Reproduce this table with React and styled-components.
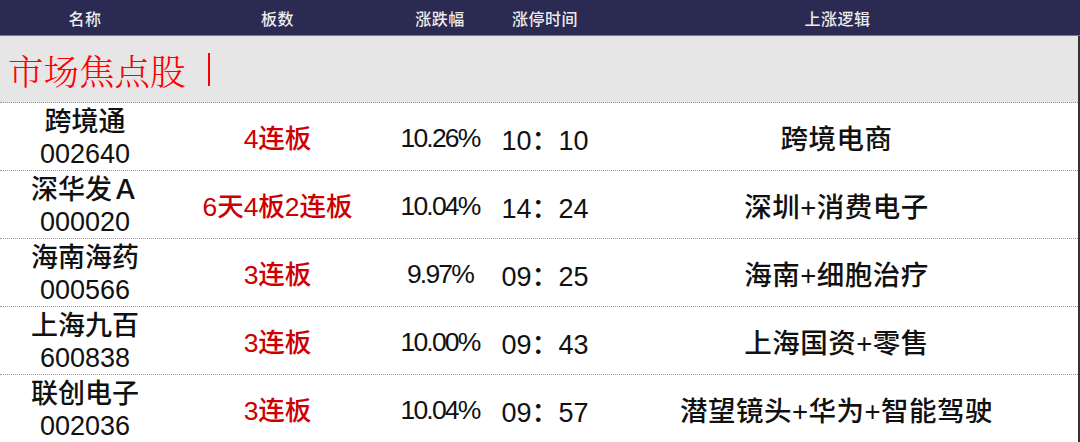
import styled, { createGlobalStyle } from 'styled-components';

const GlobalStyle = createGlobalStyle`
    html, body {
        margin: 0;
        padding: 0;
        background: #ffffff;
    }
    body {
        font-family: "Liberation Sans", "Noto Sans CJK SC", sans-serif;
    }
`;

const COLS = '170px 215px 110px 100px 1fr';

const Board = styled.div`
    width: 1080px;
    height: 442px;
    overflow: hidden;
    display: flex;
    flex-direction: column;
`;

const HeadRow = styled.div`
    display: grid;
    grid-template-columns: ${COLS};
    height: 37px;
    align-items: center;
    background: #2b2a52;
    color: #ececec;
    font-size: 16px;
    font-weight: 500;
    border-bottom: 1px solid #7a7a80;
`;

const HeadCell = styled.div`
    text-align: center;
    letter-spacing: 0.5px;
`;

const Body = styled.div`
    flex: 1;
    display: flex;
    flex-direction: column;
    border-right: 2px solid #333;
`;

const Banner = styled.div`
    height: 66px;
    background: #e6e6e6;
    display: flex;
    align-items: center;
    padding-left: 8px;
    gap: 22px;
    color: #ff0000;
    font-family: "Noto Serif CJK SC", "Liberation Serif", "Noto Sans CJK SC", serif;
    font-size: 35.5px;
    font-weight: 300;
    border-bottom: 1px dotted #9a9a9a;
`;

const Bar = styled.span`
    width: 2px;
    height: 33px;
    background: #ff0000;
`;

const Row = styled.div`
    display: grid;
    grid-template-columns: ${COLS};
    height: 67px;
    align-items: center;
    color: #111;
    font-weight: 500;
    border-bottom: ${(p) => (p.last ? 'none' : '1px dotted #9a9a9a')};
`;

const Name = styled.div`
    text-align: center;
    font-size: 27px;
    line-height: 32px;
    padding-top: 3px;
`;

const Boards = styled.div`
    text-align: center;
    color: #cc0000;
    font-size: 26.5px;
`;

const Pct = styled.div`
    text-align: center;
    font-size: 26.5px;
    letter-spacing: -1.8px;
    padding-top: 3px;
`;

const Time = styled.div`
    text-align: center;
    font-size: 27px;
    padding-top: 3px;
`;

const Logic = styled.div`
    text-align: center;
    font-size: 27.5px;
    letter-spacing: 0.5px;
`;

const stocks = [
    { name: '跨境通', code: '002640', boards: '4连板', pct: '10.26%', time: '10：10', logic: '跨境电商' },
    { name: '深华发Ａ', code: '000020', boards: '6天4板2连板', pct: '10.04%', time: '14：24', logic: '深圳+消费电子' },
    { name: '海南海药', code: '000566', boards: '3连板', pct: '9.97%', time: '09：25', logic: '海南+细胞治疗' },
    { name: '上海九百', code: '600838', boards: '3连板', pct: '10.00%', time: '09：43', logic: '上海国资+零售' },
    { name: '联创电子', code: '002036', boards: '3连板', pct: '10.04%', time: '09：57', logic: '潜望镜头+华为+智能驾驶' },
];

export default function App() {
    return (
        <Board>
            <GlobalStyle />
            <HeadRow>
                <HeadCell>名称</HeadCell>
                <HeadCell>板数</HeadCell>
                <HeadCell>涨跌幅</HeadCell>
                <HeadCell>涨停时间</HeadCell>
                <HeadCell>上涨逻辑</HeadCell>
            </HeadRow>
            <Body>
                <Banner>
                    市场焦点股
                    <Bar />
                </Banner>
                {stocks.map((s, i) => (
                    <Row key={s.code} last={i === stocks.length - 1}>
                        <Name>
                            {s.name}
                            <br />
                            {s.code}
                        </Name>
                        <Boards>{s.boards}</Boards>
                        <Pct>{s.pct}</Pct>
                        <Time>{s.time}</Time>
                        <Logic>{s.logic}</Logic>
                    </Row>
                ))}
            </Body>
        </Board>
    );
}
